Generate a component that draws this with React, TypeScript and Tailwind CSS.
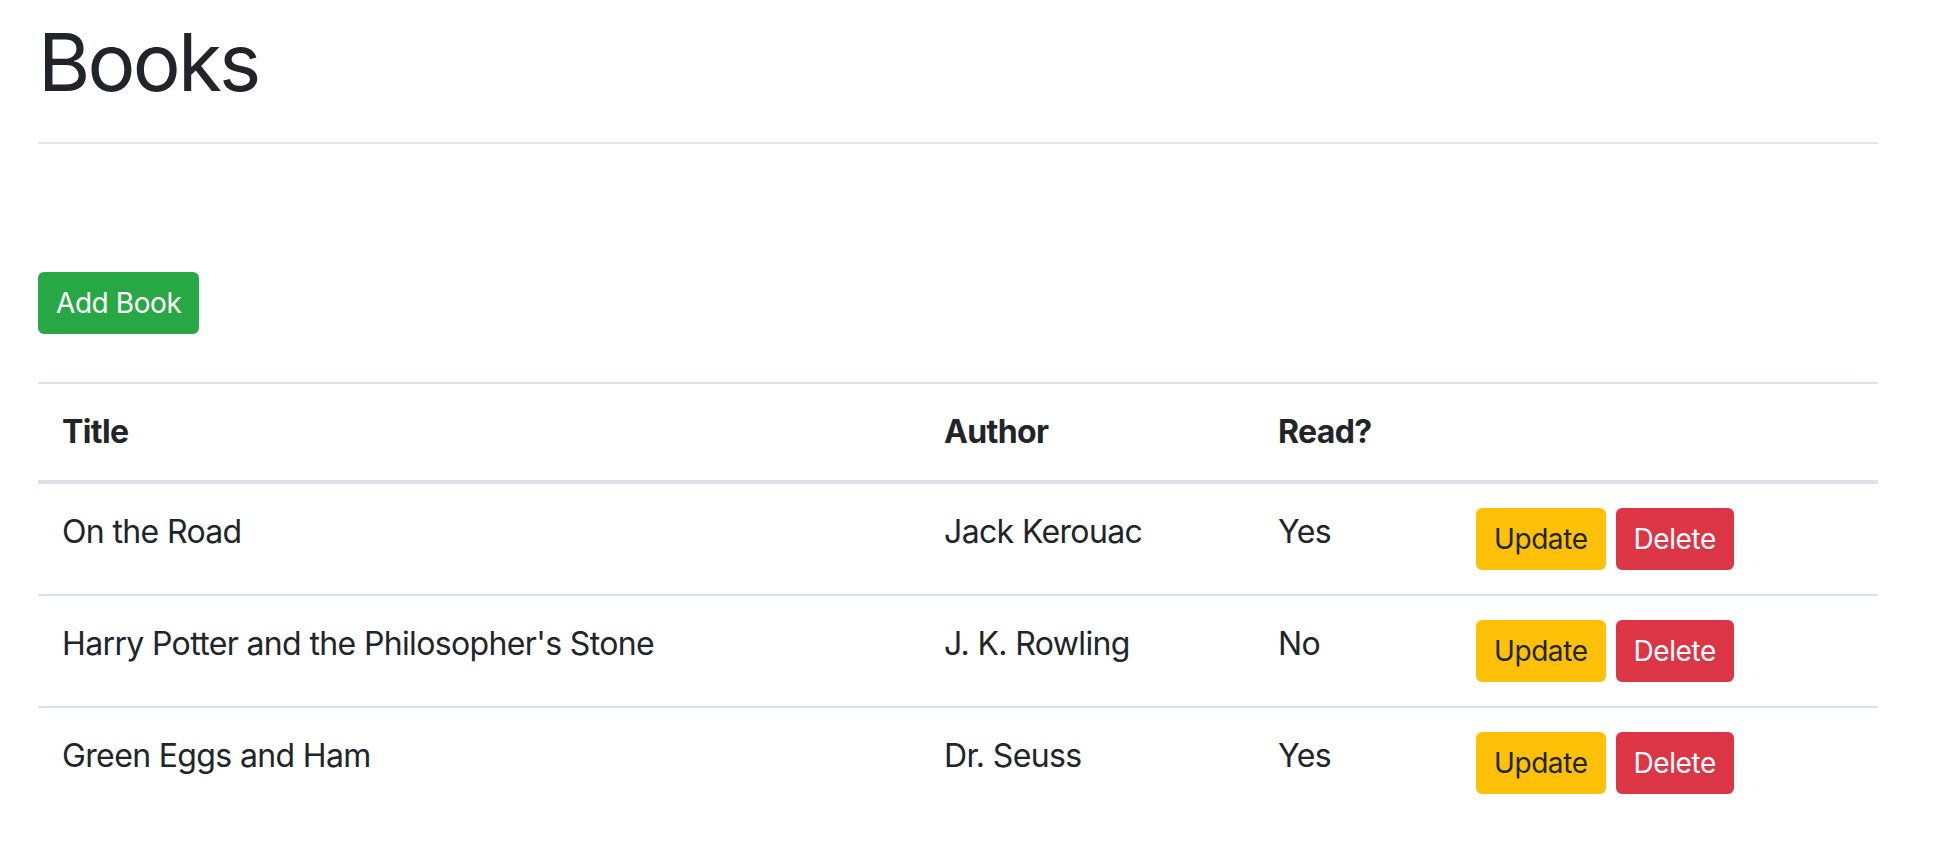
import React from 'react';

type Book = {
  title: string;
  author: string;
  read: boolean;
};

const books: Book[] = [
  { title: 'On the Road', author: 'Jack Kerouac', read: true },
  { title: "Harry Potter and the Philosopher's Stone", author: 'J. K. Rowling', read: false },
  { title: 'Green Eggs and Ham', author: 'Dr. Seuss', read: true },
];

const btn =
  'inline-block rounded-[6px] border-2 px-[16px] py-[8px] text-[28px] leading-[42px] font-normal tracking-[-0.015em]';

const cell = 'p-[24px] align-top';

const App: React.FC = () => {
  return (
    <div
      className="min-h-screen bg-white text-[#212529] text-[32px] leading-[48px] tracking-[-0.02em]"
      style={{ fontFamily: 'Inter, "Noto Sans", "Liberation Sans", sans-serif' }}
    >
      <div className="ml-[38px] w-[1840px] pt-[14px]">
        <h1 className="text-[80px] leading-[96px] font-normal tracking-[-0.035em]">Books</h1>
        <hr className="mt-[32px] mb-[32px] border-0 border-t-2 border-black/10" />
        <div className="h-[96px]" />
        <button className={`${btn} border-[#28a745] bg-[#28a745] text-white`}>Add Book</button>
        <div className="h-[48px]" />

        <table className="w-full table-fixed border-collapse">
          <colgroup>
            <col className="w-[882px]" />
            <col className="w-[334px]" />
            <col className="w-[198px]" />
            <col />
          </colgroup>
          <thead>
            <tr>
              <th className="border-t-2 border-b-4 border-[#dee2e6] p-[24px] text-left font-bold align-bottom">Title</th>
              <th className="border-t-2 border-b-4 border-[#dee2e6] p-[24px] text-left font-bold align-bottom">Author</th>
              <th className="border-t-2 border-b-4 border-[#dee2e6] p-[24px] text-left font-bold align-bottom">Read?</th>
              <th className="border-t-2 border-b-4 border-[#dee2e6] p-[24px]"></th>
            </tr>
          </thead>
          <tbody>
            {books.map((book, i) => {
              const border = i > 0 ? 'border-t-2 border-[#dee2e6]' : '';
              return (
                <tr key={i}>
                  <td className={`${cell} ${border}`}>{book.title}</td>
                  <td className={`${cell} ${border}`}>{book.author}</td>
                  <td className={`${cell} ${border}`}>{book.read ? 'Yes' : 'No'}</td>
                  <td className={`${cell} ${border}`}>
                    <div className="flex gap-[10px]">
                      <button className={`${btn} border-[#ffc107] bg-[#ffc107] text-[#212529]`}>Update</button>
                      <button className={`${btn} border-[#dc3545] bg-[#dc3545] text-white`}>Delete</button>
                    </div>
                  </td>
                </tr>
              );
            })}
          </tbody>
        </table>
      </div>
    </div>
  );
};

export default App;
